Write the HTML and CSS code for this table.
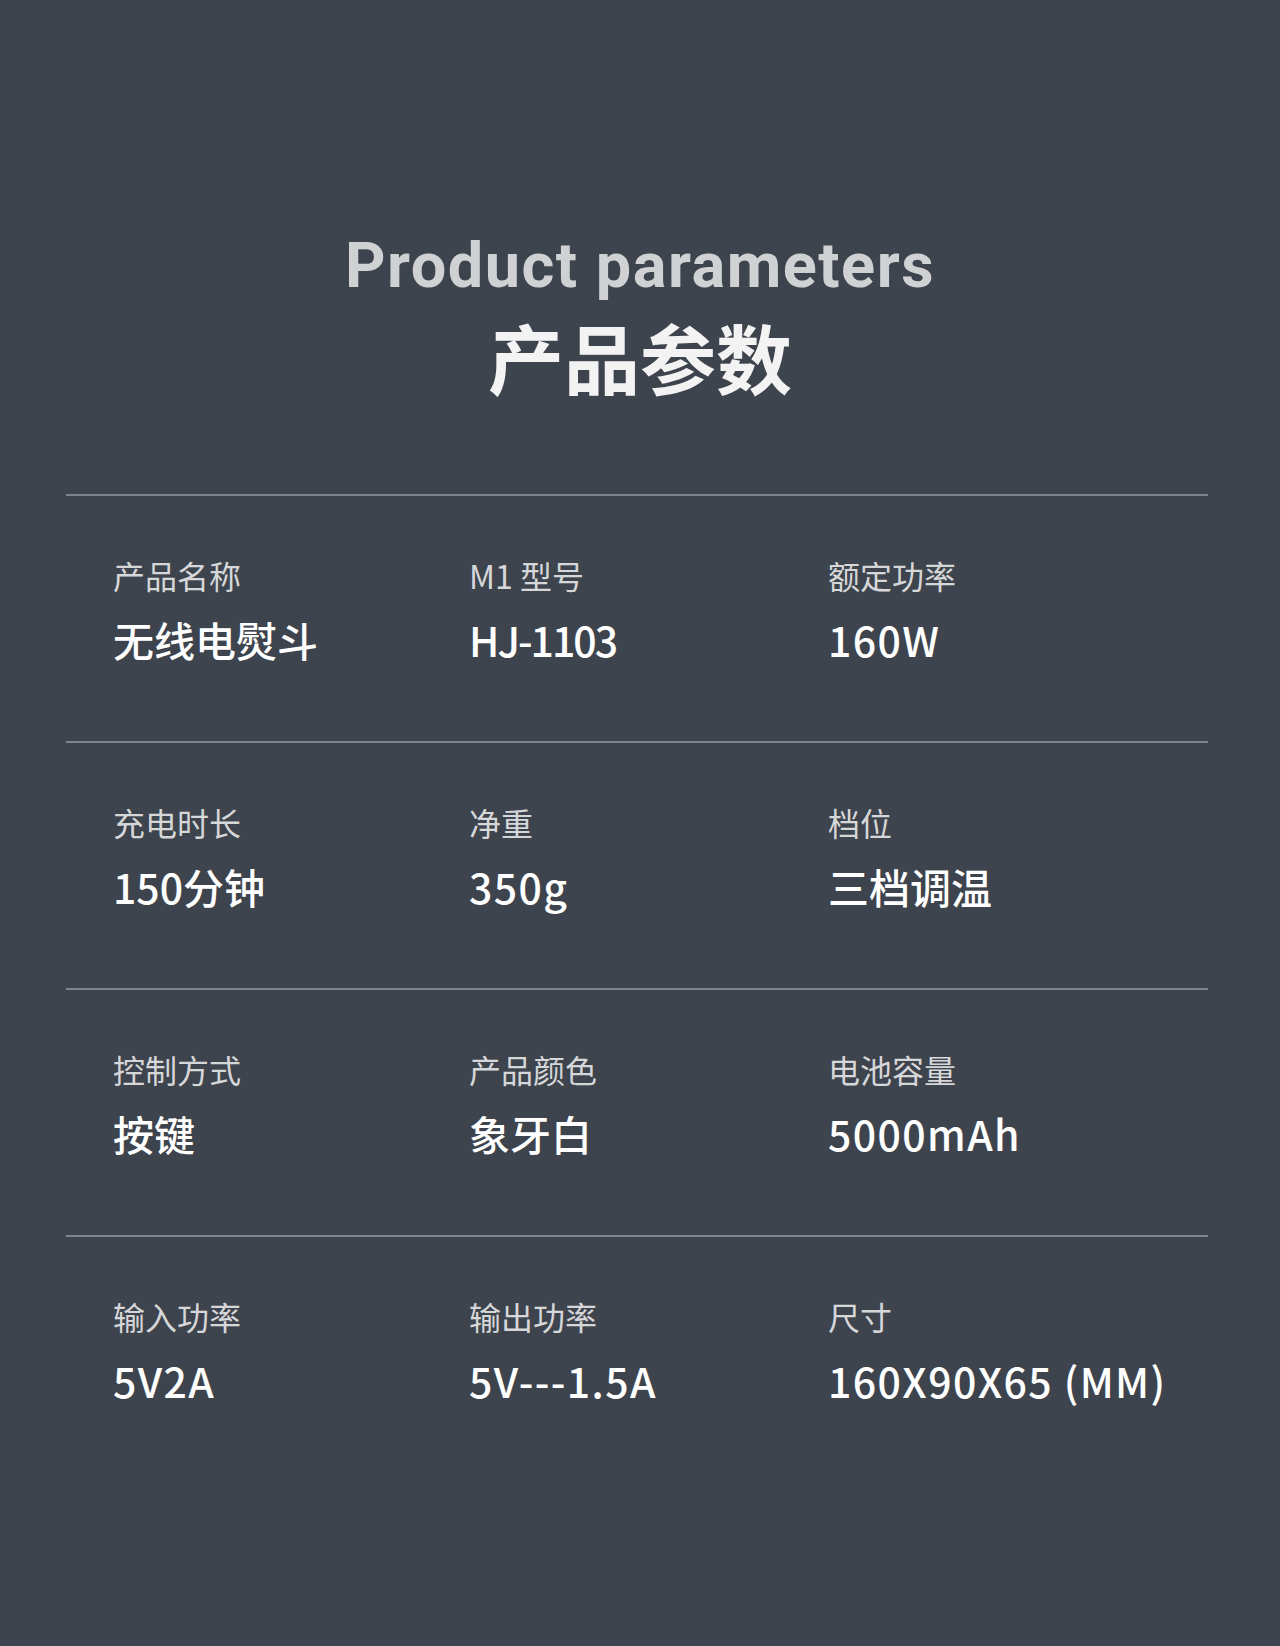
FILE: index.html
```html
<!DOCTYPE html>
<html lang="zh-CN">
<head>
<meta charset="utf-8">
<title>Product parameters 产品参数</title>
<link rel="stylesheet" href="styles.css">
</head>
<body>
<main class="page">
  <header class="heading">
    <h1 class="title-en">Product parameters</h1>
    <h2 class="title-cn">产品参数</h2>
  </header>
  <section class="spec">
    <div class="row">
      <div class="cell"><div class="label">产品名称</div><div class="value">无线电熨斗</div></div>
      <div class="cell"><div class="label">M1 型号</div><div class="value tight">HJ-1103</div></div>
      <div class="cell"><div class="label">额定功率</div><div class="value num">160W</div></div>
    </div>
    <div class="row">
      <div class="cell"><div class="label">充电时长</div><div class="value">150分钟</div></div>
      <div class="cell"><div class="label">净重</div><div class="value num">350g</div></div>
      <div class="cell"><div class="label">档位</div><div class="value">三档调温</div></div>
    </div>
    <div class="row">
      <div class="cell"><div class="label">控制方式</div><div class="value">按键</div></div>
      <div class="cell"><div class="label">产品颜色</div><div class="value">象牙白</div></div>
      <div class="cell"><div class="label">电池容量</div><div class="value num">5000mAh</div></div>
    </div>
    <div class="row">
      <div class="cell"><div class="label">输入功率</div><div class="value num">5V2A</div></div>
      <div class="cell"><div class="label">输出功率</div><div class="value num">5V---1.5A</div></div>
      <div class="cell"><div class="label">尺寸</div><div class="value num">160X90X65 (MM)</div></div>
    </div>
  </section>
</main>
</body>
</html>
```
FILE: styles.css
```css
html, body {
  margin: 0;
  padding: 0;
  background: #3e444d;
}
.page {
  min-height: 1646px;
  background: #3e444d;
  font-family: "Noto Sans CJK SC", "Noto Sans", sans-serif;
}
.heading {
  padding-top: 234px;
  display: flex;
  flex-direction: column;
  align-items: center;
}
.title-en {
  margin: 0;
  font-family: Roboto, "Noto Sans", sans-serif;
  font-weight: 700;
  font-size: 63px;
  line-height: 63px;
  letter-spacing: 1.5px;
  color: #d0d1d3;
}
.title-cn {
  margin: 21px 0 0;
  font-family: "Noto Sans CJK SC", sans-serif;
  font-weight: 700;
  font-size: 76px;
  line-height: 76px;
  color: #f3f3f3;
}
.spec {
  margin: 100px 0 0 66px;
  width: 1142px;
}
.row {
  border-top: 2px solid #80848a;
  padding: 63px 0 0 47px;
  box-sizing: border-box;
  height: 247px;
  display: grid;
  grid-template-columns: 356px 359px 1fr;
  align-content: start;
}
.cell {
  display: flex;
  flex-direction: column;
  gap: 28px;
}
.label {
  font-size: 32px;
  line-height: 32px;
  font-weight: 400;
  color: #d6d7d9;
}
.value {
  font-size: 41px;
  line-height: 40px;
  font-weight: 500;
  color: #ffffff;
}
.num {
  letter-spacing: 1.4px;
}
.tight {
  letter-spacing: -2px;
}
```
